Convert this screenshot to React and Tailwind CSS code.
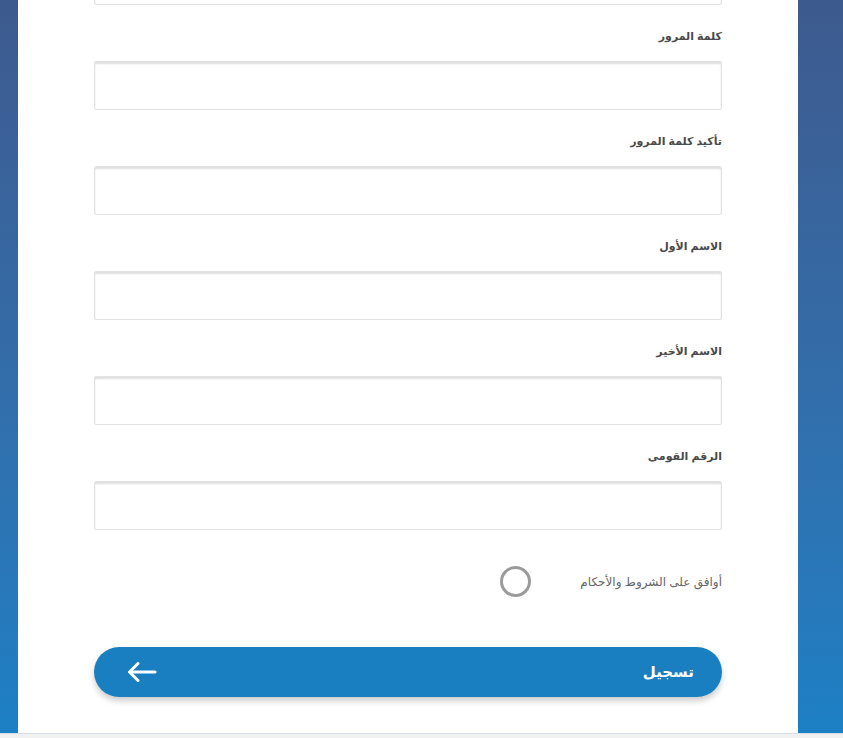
const fields = ["كلمة المرور", "تأكيد كلمة المرور", "الاسم الأول", "الاسم الأخير", "الرقم القومى"];

const Field = ({ label, className = "" }) => (
  <div className={"flex flex-col " + className}>
    <label className="text-right text-[11px] font-bold leading-[16px] text-[#4a4a4a] mb-[17px]">{label}</label>
    <input
      type="text"
      className="h-[49px] w-full rounded-[2px] border border-[#e2e2e2] bg-white shadow-[inset_0_2px_2px_rgba(0,0,0,0.13)] outline-none"
    />
  </div>
);

export default function App() {
  return (
    <div
      dir="rtl"
      className="flex h-[738px] w-full flex-col overflow-hidden bg-gradient-to-b from-[#3d5a8e] to-[#1b80c5]"
      style={{ fontFamily: '"Liberation Sans", "DejaVu Sans", sans-serif' }}
    >
      <div className="flex flex-1 overflow-hidden">
        {/* white form panel */}
        <div className="mr-[45px] w-[780px] overflow-hidden bg-white px-[76px]">
          <div className="-mt-[44px] flex flex-col">
            <input
              type="email"
              className="h-[49px] w-full rounded-[2px] border border-[#e2e2e2] bg-white shadow-[inset_0_2px_2px_rgba(0,0,0,0.13)] outline-none"
            />
            {fields.map((f) => (
              <Field key={f} label={f} className="mt-[23px]" />
            ))}

            <div className="mt-[36px] flex h-[31px] items-center gap-[47px]">
              <span className="w-[144px] whitespace-nowrap text-right text-[12px] text-[#666]">أوافق على الشروط والأحكام</span>
              <span className="h-[31px] w-[31px] rounded-full border-[3px] border-[#9b9b9b]"></span>
            </div>

            <button className="mt-[50px] flex h-[50px] w-full items-center justify-between rounded-full bg-[#1a7fc1] pl-[30px] pr-[28px] text-white shadow-[0_4px_6px_rgba(0,0,0,0.2)]">
              <span className="text-[15px] font-bold">تسجيل</span>
              <svg width="30" height="22" viewBox="0 0 30 22" fill="none" stroke="white" strokeWidth="3" strokeLinecap="round" strokeLinejoin="round" className="ml-[3px]">
                <path d="M28 11H3" />
                <path d="M11 2.5 2.5 11 11 19.5" />
              </svg>
            </button>
          </div>
        </div>
      </div>
      <div className="h-[5px] border-t border-[#d6dde6] bg-[#f1f1f1]"></div>
    </div>
  );
}
